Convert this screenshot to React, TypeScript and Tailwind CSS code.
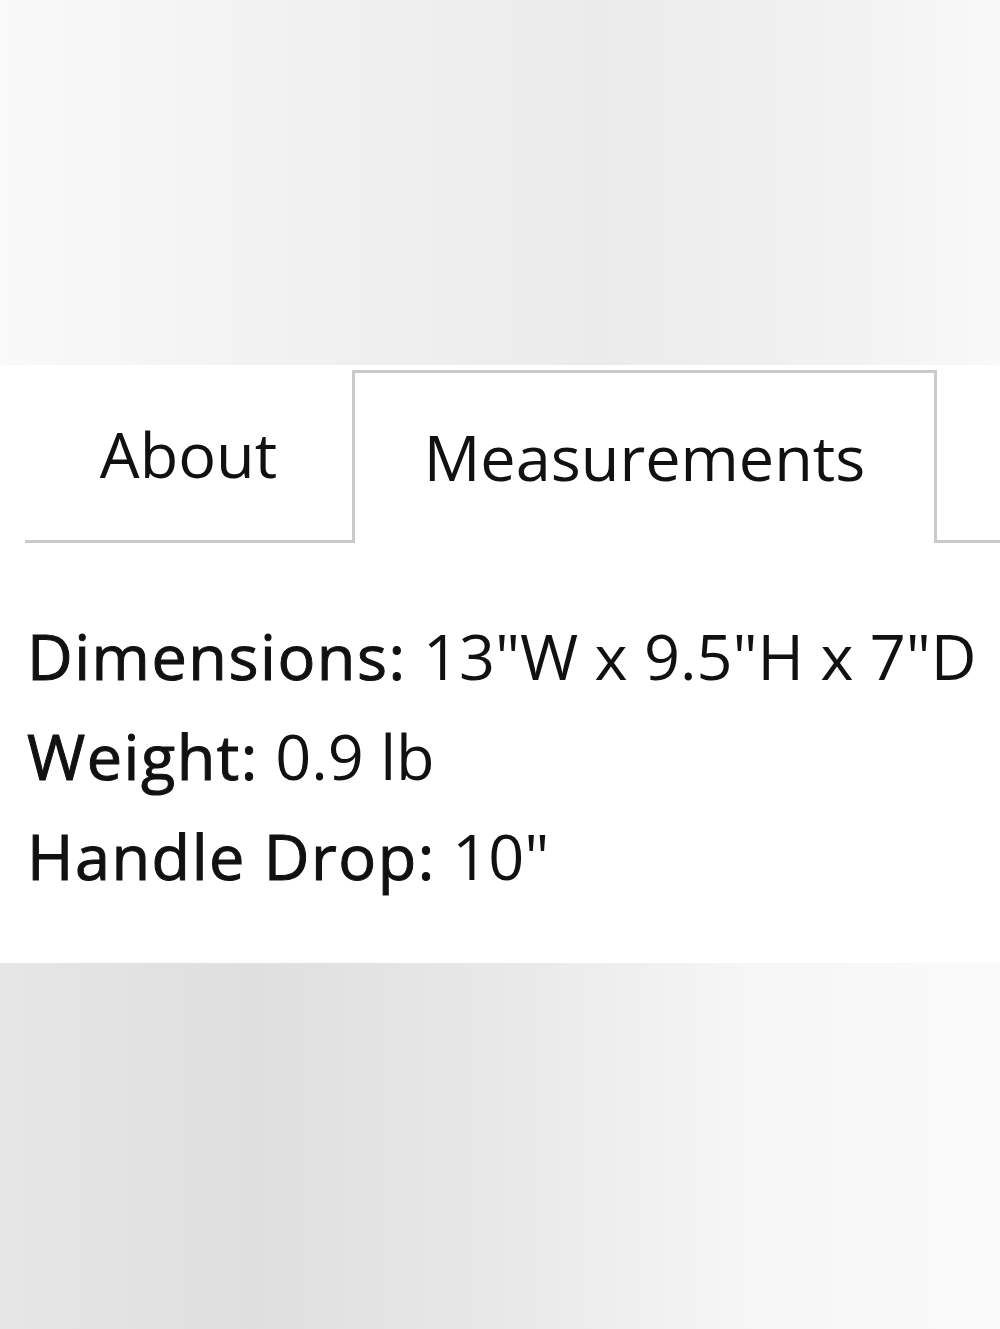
export default function App() {
  const specs = [
    { label: "Dimensions:", value: '13"W x 9.5"H x 7"D' },
    { label: "Weight:", value: "0.9 lb" },
    { label: "Handle Drop:", value: '10"' },
  ];

  return (
    <div className="w-[1000px] h-[1329px] flex flex-col font-['Open_Sans',sans-serif] text-[#111]">
      <div className="h-[365px] bg-[linear-gradient(to_right,#f9f9f9_0%,#f1f1f1_30%,#ebebeb_60%,#f2f2f2_85%,#f9f9f9_100%)]" />

      <div className="h-[598px] bg-white pt-[5px]">
        <div className="flex pl-[25px]">
          <div className="w-[327px] h-[173px] flex items-center justify-center border-b-[3px] border-[#cacaca] text-[63px] leading-none pb-[4px]">
            About
          </div>
          <div className="w-[585px] h-[173px] flex items-center justify-center border-[3px] border-b-0 border-[#cacaca] text-[63px] leading-none pb-[4px]">
            Measurements
          </div>
          <div className="flex-1 h-[173px] border-b-[3px] border-[#cacaca]" />
        </div>

        <div className="mt-[63px] pl-[27px]">
          {specs.map((s) => (
            <div key={s.label} className="h-[100px] leading-[100px] text-[63px] whitespace-nowrap">
              <span className="font-normal tracking-[1.5px] [-webkit-text-stroke:1px_#111]">{s.label}</span>{" "}
              <span className="font-normal">{s.value}</span>
            </div>
          ))}
        </div>
      </div>

      <div className="flex-1 bg-[linear-gradient(to_right,#e6e6e6_0%,#dfdfdf_25%,#e8e8e8_50%,#f6f6f6_75%,#fafafa_100%)]" />
    </div>
  );
}
